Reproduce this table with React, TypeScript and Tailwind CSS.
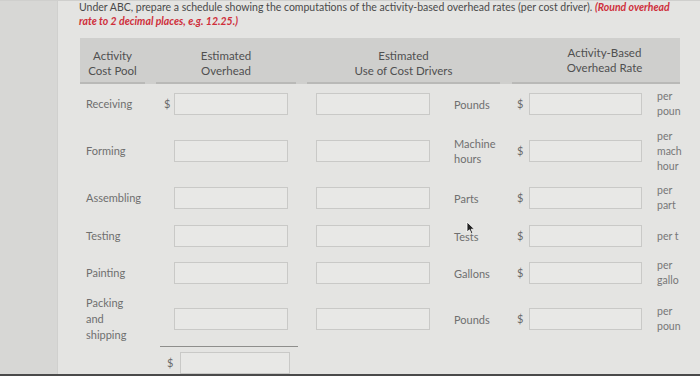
import React from "react";

const Box = ({ w = "w-[114px]" }: { w?: string }) => (
  <div className={`${w} h-[22px] border border-[#c9c9c7] bg-[#e8e8e6] shrink-0`} />
);

type RowProps = {
  h: string;
  label: React.ReactNode;
  dollar?: boolean;
  unit: React.ReactNode;
  per: React.ReactNode;
};

const Row = ({ h, label, dollar, unit, per }: RowProps) => (
  <div className={`flex items-center ${h}`}>
    <div className="w-[80px] shrink-0 pl-[6px] text-[11px] leading-[16px] text-[#6f6f6f]">{label}</div>
    <div className="w-[14px] shrink-0 pl-[4px] text-[11px] text-[#6a6a6a]">{dollar ? "$" : ""}</div>
    <Box />
    <div className="w-[28px] shrink-0" />
    <Box />
    <div className="w-[22px] shrink-0" />
    <div className="w-[60px] shrink-0 pl-[2px] text-[11px] leading-[15px] text-[#6f6f6f]">{unit}</div>
    <div className="w-[17px] shrink-0 pl-[5px] text-[11px] text-[#6a6a6a]">$</div>
    <Box w="w-[113px]" />
    <div className="w-[15px] shrink-0" />
    <div className="w-[28px] shrink-0 whitespace-nowrap text-[10.5px] leading-[15px] text-[#777]">{per}</div>
  </div>
);

export default function App() {
  return (
    <div className="w-[700px] h-[376px] flex flex-col overflow-hidden bg-[#e4e4e2] font-['Lato','Open_Sans',sans-serif]">
      <div className="flex flex-1 border-t border-[#cfcfcd]">
        <div className="w-[58px] shrink-0 bg-[#d7d7d5] border-r border-[#d0d0ce]" />
        <div className="relative flex-1 pl-[21px]">
          <div className="-mt-[1px] text-[10.5px] leading-[14px] text-[#4a4a4a] whitespace-nowrap">
            Under ABC, prepare a schedule showing the computations of the activity-based overhead rates (per cost driver).{" "}
            <span className="font-bold italic text-[#cf2f3b]">(Round overhead</span>
            <br />
            <span className="font-bold italic text-[#cf2f3b]">rate to 2 decimal places, e.g. 12.25.)</span>
          </div>

          <div className="ml-px mt-[10px] w-[600px] h-[46px] flex gap-[11px] bg-[#cfcfcd] text-[11.5px] leading-[15px] text-[#505050] text-center">
            <div className="w-[65px] pt-[10px] border-b-2 border-[#b9b9b7]">Activity<br />Cost Pool</div>
            <div className="w-[140px] pt-[10px] border-b-2 border-[#b9b9b7]">Estimated<br />Overhead</div>
            <div className="w-[193px] pt-[10px] border-b-2 border-[#b9b9b7]">Estimated<br />Use of Cost Drivers</div>
            <div className="w-[168px] pt-[7px] pl-[17px] border-b-2 border-[#b9b9b7] ml-px">Activity-Based<br />Overhead Rate</div>
          </div>

          <div className="ml-px">
            <Row h="h-[40px]" label="Receiving" dollar unit="Pounds" per={<>per<br />poun</>} />
            <Row h="h-[54px]" label="Forming" unit={<>Machine<br />hours</>} per={<>per<br />mach<br />hour</>} />
            <Row h="h-[40px]" label="Assembling" unit="Parts" per={<>per<br />part</>} />
            <Row h="h-[36px]" label="Testing" unit="Tests" per={<>per t</>} />
            <Row h="h-[38px]" label="Painting" unit="Gallons" per={<>per<br />gallo</>} />
            <Row h="h-[54px]" label={<>Packing<br />and<br />shipping</>} unit="Pounds" per={<>per<br />poun</>} />
            <div className="ml-[80px] w-[138px] border-t border-[#8e8e8c]" />
            <div className="flex items-center mt-[5px] ml-[80px]">
              <div className="w-[20px] pl-[7px] text-[11px] text-[#6a6a6a]">$</div>
              <Box w="w-[110px]" />
            </div>
          </div>

          <svg className="absolute left-[408px] top-[220px]" width="10" height="14" viewBox="0 0 10 14">
            <path d="M1 1 L1 11 L3.5 8.8 L5.3 12.8 L6.9 12.1 L5.2 8.2 L8.5 8.2 Z" fill="#222" stroke="#fff" strokeWidth="0.8" />
          </svg>
        </div>
      </div>
      <div className="h-[4px] bg-[#4a4a4a]" />
    </div>
  );
}
